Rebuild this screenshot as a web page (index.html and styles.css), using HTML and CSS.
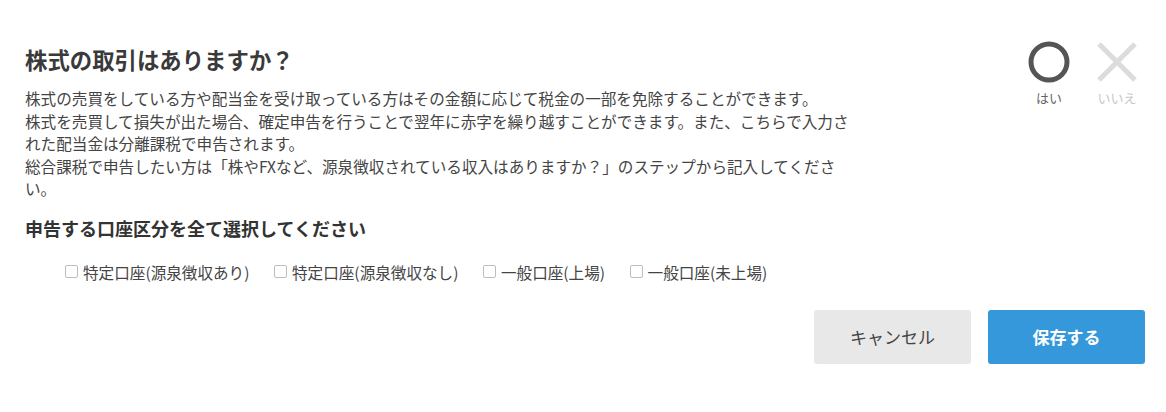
FILE: index.html
```html
<!DOCTYPE html>
<html lang="ja">
<head>
<meta charset="utf-8">
<link rel="stylesheet" href="styles.css">
</head>
<body>
<div class="page">
  <div class="top">
    <div class="main">
      <h1 class="title">株式の取引はありますか？</h1>
      <p class="desc">株式の売買をしている方や配当金を受け取っている方はその金額に応じて税金の一部を免除することができます。<br>株式を売買して損失が出た場合、確定申告を行うことで翌年に赤字を繰り越すことができます。また、こちらで入力された配当金は分離課税で申告されます。<br>総合課税で申告したい方は「株やFXなど、源泉徴収されている収入はありますか？」のステップから記入してください。</p>
    </div>
    <div class="yn">
      <div class="yn-item yes">
        <svg width="42" height="42" viewBox="0 0 42 42"><circle cx="21" cy="21" r="18" fill="none" stroke="#555" stroke-width="5"/></svg>
        <span class="yn-label">はい</span>
      </div>
      <div class="yn-item no">
        <svg width="42" height="42" viewBox="0 0 42 42"><path d="M3 3 L39 39 M39 3 L3 39" stroke="#dcdcdc" stroke-width="5" fill="none"/></svg>
        <span class="yn-label">いいえ</span>
      </div>
    </div>
  </div>
  <h2 class="sub">申告する口座区分を全て選択してください</h2>
  <div class="checks">
    <label class="check"><span class="box"></span>特定口座(源泉徴収あり)</label>
    <label class="check"><span class="box"></span>特定口座(源泉徴収なし)</label>
    <label class="check"><span class="box"></span>一般口座(上場)</label>
    <label class="check"><span class="box"></span>一般口座(未上場)</label>
  </div>
  <div class="actions">
    <button class="btn cancel">キャンセル</button>
    <button class="btn save">保存する</button>
  </div>
</div>
</body>
</html>
```
FILE: styles.css
```css
* { box-sizing: border-box; }
body {
  margin: 0;
  background: #fff;
  font-family: "Noto Sans CJK JP", "Noto Sans", sans-serif;
  color: #444;
}
.page {
  padding: 44px 21px 0 25px;
}
.top {
  display: flex;
  align-items: flex-start;
}
.main {
  width: 832px;
}
.title {
  margin: 0;
  font-size: 22.4px;
  line-height: 30px;
  font-weight: 700;
  color: #3a3a3a;
}
.desc {
  margin: 13px 0 0;
  font-size: 15.6px;
  line-height: 22.5px;
  color: #444;
}
.yn {
  margin: -3px 6px 0 auto;
  display: flex;
  gap: 24px;
}
.yn-item {
  width: 44px;
  display: flex;
  flex-direction: column;
  align-items: center;
}
.yn-item svg { display: block; }
.yn-label {
  margin-top: 6px;
  font-size: 13px;
  line-height: 18px;
  white-space: nowrap;
}
.yes .yn-label { color: #666; }
.no .yn-label { color: #c8c8c8; }
.sub {
  margin: 15px 0 0;
  font-size: 18px;
  line-height: 26px;
  font-weight: 700;
  color: #333;
}
.checks {
  margin: 20px 0 0 40px;
  display: flex;
  gap: 24.5px;
}
.check {
  display: flex;
  align-items: center;
  font-size: 15.6px;
  line-height: 22px;
  color: #444;
}
.box {
  flex: none;
  width: 13px;
  height: 13px;
  border: 1px solid #bdbdbd;
  border-radius: 2px;
  margin-right: 5px;
}
.actions {
  margin-top: 27px;
  display: flex;
  justify-content: flex-end;
  gap: 17px;
}
.btn {
  width: 157px;
  height: 54px;
  border: none;
  border-radius: 3px;
  font-family: inherit;
  font-size: 17px;
}
.cancel {
  background: #e8e8e8;
  color: #444;
}
.save {
  background: #3498db;
  color: #fff;
  font-weight: 700;
}
```
